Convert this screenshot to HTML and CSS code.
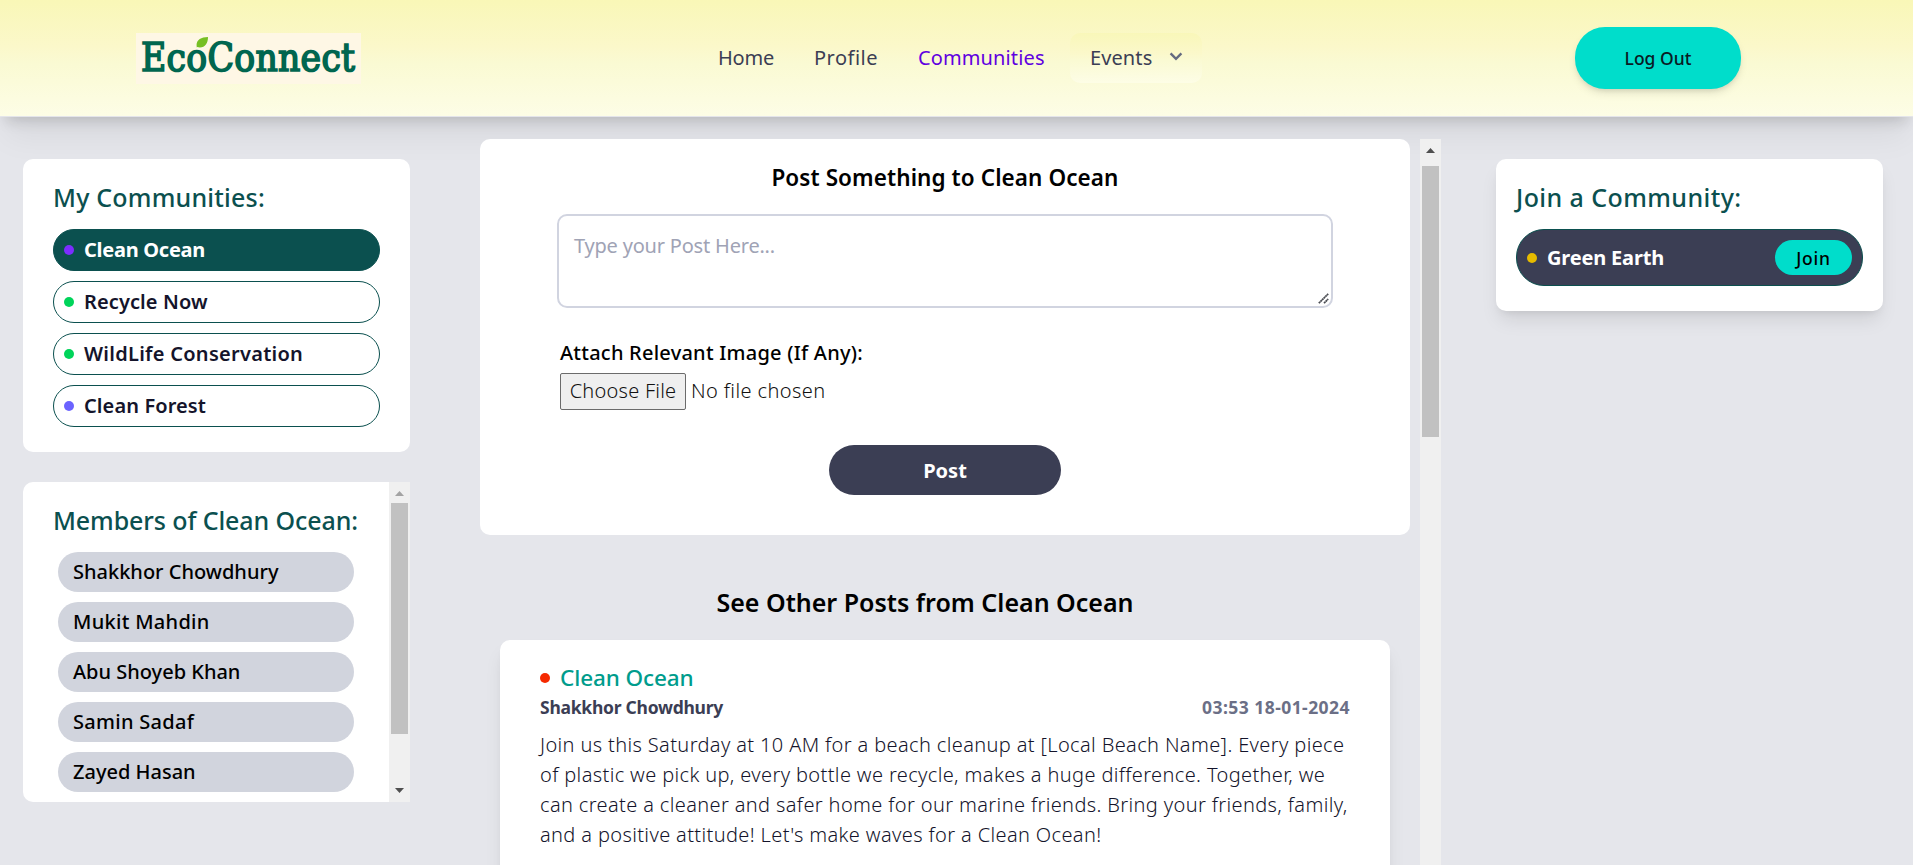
FILE: index.html
```html
<!DOCTYPE html>
<html lang="en">
<head>
<meta charset="utf-8">
<title>EcoConnect</title>
<link rel="stylesheet" href="styles.css">
</head>
<body>
<header class="topbar">
  <div class="logo">
    <span class="logo-text">EcoConnect</span>
    <svg class="leaf" width="12" height="11" viewBox="0 0 12 11"><path d="M1 11C-1 4 4 0 12 0C12 7 8 12 1 10Z" fill="#76bf23"/></svg>
  </div>
  <nav class="nav">
    <a class="home">Home</a>
    <a class="profile">Profile</a>
    <a class="active">Communities</a>
    <a class="events">Events
      <svg width="14" height="9" viewBox="0 0 14 9"><path d="M1.6 1.4L7 6.8L12.4 1.4" fill="none" stroke="#646a80" stroke-width="2.400"/></svg>
    </a>
  </nav>
  <button class="logout">Log Out</button>
</header>
<main class="layout">
  <aside class="left">
    <section class="card communities">
      <h2 class="side-title t-mine">My Communities:</h2>
      <ul class="list">
        <li class="pill selected"><i class="dot violet"></i>Clean Ocean</li>
        <li class="pill"><i class="dot green"></i>Recycle Now</li>
        <li class="pill wide"><i class="dot green"></i>WildLife Conservation</li>
        <li class="pill"><i class="dot indigo"></i>Clean Forest</li>
      </ul>
    </section>
    <section class="card members">
      <div class="members-body">
        <h2 class="side-title t-members">Members of Clean Ocean:</h2>
        <ul class="list names">
          <li>Shakkhor Chowdhury</li>
          <li class="loose">Mukit Mahdin</li>
          <li>Abu Shoyeb Khan</li>
          <li class="loose">Samin Sadaf</li>
          <li>Zayed Hasan</li>
        </ul>
      </div>
      <div class="scrollbar">
        <svg class="arrow faded" width="9" height="5" viewBox="0 0 9 5"><path d="M0 5L4.500 0L9 5Z"/></svg>
        <div class="thumb"></div>
        <svg class="arrow down" width="9" height="5" viewBox="0 0 9 5"><path d="M0 0H9L4.500 5Z"/></svg>
      </div>
    </section>
  </aside>
  <section class="feed">
    <div class="feed-body">
      <form class="card composer">
        <h2 class="composer-title">Post Something to Clean Ocean</h2>
        <div class="post-box">Type your Post Here...
          <svg class="grip" width="11" height="11" viewBox="0 0 11 11"><path d="M.8 10.200L10.200 .8M6 10.200L10.200 6" stroke="#4a4c52" stroke-width="1.700" stroke-dasharray="2 .3"/></svg>
        </div>
        <div class="attach">
          <label class="attach-label">Attach Relevant Image (If Any):</label>
          <div class="file"><span class="choose">Choose File</span><span class="none">No file chosen</span></div>
        </div>
        <button class="post-btn" type="button">Post</button>
      </form>
      <h2 class="others">See Other Posts from Clean Ocean</h2>
      <article class="card post">
        <h3 class="post-title"><i class="dot red"></i>Clean Ocean</h3>
        <div class="meta"><span class="author">Shakkhor Chowdhury</span><time>03:53 18-01-2024</time></div>
        <p class="text">Join us this Saturday at 10 AM for a beach cleanup at [Local Beach Name]. Every piece<br>of plastic we pick up, every bottle we recycle, makes a huge difference. Together, we<br>can create a cleaner and safer home for our marine friends. Bring your friends, family,<br>and a positive attitude! Let's make waves for a Clean Ocean!</p>
      </article>
    </div>
    <div class="scrollbar">
      <svg class="arrow" width="9" height="5" viewBox="0 0 9 5"><path d="M0 5L4.500 0L9 5Z"/></svg>
      <div class="thumb"></div>
    </div>
  </section>
  <aside class="card join">
    <h2 class="side-title t-join">Join a Community:</h2>
    <div class="join-row"><i class="dot amber"></i><span class="join-name">Green Earth</span><button class="join-btn">Join</button></div>
  </aside>
</main>
</body>
</html>
```
FILE: styles.css
```css
* { box-sizing: border-box; }
body {
  margin: 0;
  height: 865px;
  overflow: hidden;
  background: #e5e6eb;
  font: 400 20px/30px "Noto Sans", sans-serif;
  color: #000;
}
h2, h3, p, ul { margin: 0; padding: 0; font-weight: 500; }
ul { list-style: none; }
button { border: 0; padding: 0; font-family: inherit; }
svg { display: block; }
.card { background: #fff; border-radius: 10px; }

.topbar {
  display: flex;
  align-items: center;
  height: 117px;
  padding: 0 172px 1px 136px;
  background: linear-gradient(#f9f7b7, #fbf8ca 40%, #fafad3 55%, #fdfde6) 0 0 / 100% 116px no-repeat, #e4e5ea;
  box-shadow: 0 25px 31px -6px rgba(0,0,0,.06), 0 10px 13px -6px rgba(0,0,0,.15);
}
.logo {
  position: relative;
  width: 225px;
  height: 51px;
  padding-left: 5px;
  background: #fef7e5;
}
.logo-text {
  font: 400 38.500px/50px "DejaVu Serif Condensed", "DejaVu Serif", serif;
  font-stretch: condensed;
  letter-spacing: .3px;
  color: #00664f;
  -webkit-text-stroke: 1.600px #00664f;
}
.leaf { position: absolute; left: 60px; top: 4px; }
.nav {
  display: flex;
  align-items: center;
  height: 50px;
  margin-left: 357px;
  color: #3b3e54;
}
.home { width: 96px; letter-spacing: -.2px; }
.profile { width: 104px; letter-spacing: .5px; }
.active { width: 152px; color: #6000e0; letter-spacing: .12px; }
.events {
  display: flex;
  align-items: center;
  gap: 17px;
  width: 132px;
  height: 50px;
  padding-left: 20px;
  border-radius: 10px;
  background: linear-gradient(#f9f7b9, #fbf8ca 40%, #fafad3 55%, #fdfde6);
  letter-spacing: .1px;
}
.events svg { margin-top: -4px; }
.logout {
  width: 166px;
  height: 62px;
  margin-left: auto;
  border-radius: 30px;
  background: #00ddcb;
  color: #0a1a24;
  font-size: 17.500px;
  font-weight: 500;
  box-shadow: 0 5px 8px -1px rgba(0,0,0,.1), 0 3px 5px -2px rgba(0,0,0,.1);
}

.layout { display: flex; align-items: flex-start; height: 748px; }
.left { width: 387px; margin: 42px 70px 0 23px; }
.communities { height: 293px; padding: 21px 30px; }
.side-title { font-size: 25px; line-height: 35px; color: #0b504f; white-space: nowrap; }
.t-mine { letter-spacing: .2px; }
.t-members { letter-spacing: -.1px; }
.t-join { letter-spacing: .42px; }
.list { display: flex; flex-direction: column; gap: 10px; margin-top: 14px; }
.pill {
  display: flex;
  align-items: center;
  gap: 10px;
  height: 42px;
  padding-left: 10px;
  border: 1px solid #0b504f;
  border-radius: 21px;
  font-weight: 600;
  letter-spacing: .1px;
  color: #14142b;
}
.pill.wide { letter-spacing: .27px; }
.pill.selected { background: #0b504f; color: #fff; font-weight: 700; letter-spacing: -.27px; }
.dot { width: 10px; height: 10px; border-radius: 50%; flex: none; }
.violet { background: #7c2dff; }
.green { background: #00d45a; }
.indigo { background: #6b63ff; }
.red { background: #f52900; }
.amber { background: #e6bb00; }
.members { display: flex; height: 320px; margin-top: 30px; border-radius: 10px 0 0 10px; }
.members-body { width: 366px; padding: 21px 30px; }
.names { width: 296px; margin: 14px 0 0 5px; }
.names li {
  height: 40px;
  padding-left: 15px;
  border-radius: 20px;
  background: #d1d4dd;
  line-height: 40px;
  font-weight: 500;
}
.names .loose { letter-spacing: .3px; }
.scrollbar {
  display: flex;
  flex-direction: column;
  align-items: center;
  width: 21px;
  background: #f0f0f0;
}
.thumb { width: 17px; background: #c1c1c1; }
.arrow { margin-top: 9px; fill: #4f4f4f; }
.arrow.faded { fill: #a3a3a3; }
.members .thumb { height: 231px; margin-top: 7px; }
.arrow.down { margin-top: 54px; }

.feed { display: flex; width: 961px; height: 726px; margin-top: 22px; overflow: hidden; }
.feed-body { width: 940px; padding-right: 10px; }
.feed .thumb { height: 271px; margin-top: 13px; }
.composer { display: flex; flex-direction: column; align-items: center; height: 396px; padding-top: 23px; }
.composer-title { font-size: 22.500px; line-height: 32px; font-weight: 600; letter-spacing: .08px; }
.post-box {
  position: relative;
  width: 776px;
  height: 94px;
  margin-top: 20px;
  padding: 15px 15px;
  border: 2px solid #d1d4e0;
  border-radius: 10px;
  color: #a0a3b5;
  letter-spacing: -.2px;
}
.grip { position: absolute; right: 2px; bottom: 2px; }
.attach { width: 770px; margin-top: 30px; }
.attach-label { display: block; font-weight: 500; letter-spacing: .24px; }
.file { display: flex; align-items: center; gap: 5px; margin-top: 5px; font-weight: 350; color: #111; }
.choose {
  width: 126px;
  height: 37px;
  border: 1px solid #6b6b6b;
  border-radius: 2px;
  background: #efefef;
  text-align: center;
  line-height: 34px;
  letter-spacing: .24px;
}
.none { letter-spacing: .4px; line-height: 34px; margin-top: -1px; }
.post-btn {
  width: 232px;
  height: 50px;
  margin-top: 35px;
  border-radius: 25px;
  background: #3b3e54;
  color: #fff;
  font-size: 20px;
  font-weight: 700;
}
.others {
  margin: 50px 40px 20px 0;
  text-align: center;
  font-size: 25px;
  line-height: 35px;
  font-weight: 600;
}
.post {
  height: 400px;
  margin: 0 20px;
  padding: 20px 40px;
  box-shadow: 0 12px 19px -4px rgba(0,0,0,.1), 0 5px 8px -5px rgba(0,0,0,.1);
}
.post-title {
  display: flex;
  align-items: center;
  gap: 10px;
  font-size: 22.500px;
  line-height: 35px;
  letter-spacing: -.1px;
  color: #009c8c;
}
.meta { display: flex; justify-content: space-between; height: 25px; line-height: 25px; font-size: 17.500px; font-weight: 700; }
.author { color: #3b3e54; letter-spacing: -.26px; }
time { color: #6b6f86; letter-spacing: .45px; }
.text { margin-top: 10px; font-weight: 350; letter-spacing: .365px; color: #14142b; white-space: nowrap; }

.join {
  width: 387px;
  height: 152px;
  margin: 42px 0 0 55px;
  padding: 21px 20px;
  box-shadow: 0 12px 19px -4px rgba(0,0,0,.1), 0 5px 8px -5px rgba(0,0,0,.1);
}
.join-row {
  display: flex;
  align-items: center;
  gap: 10px;
  height: 57px;
  margin-top: 14px;
  padding: 0 10px;
  border: 1px solid #0b504f;
  border-radius: 28px;
  background: #3b3e54;
}
.join-name { color: #fff; font-weight: 700; letter-spacing: -.17px; }
.join-btn {
  width: 77px;
  height: 35px;
  margin-left: auto;
  border-radius: 18px;
  background: #00ddcb;
  font-size: 17.500px;
  font-weight: 500;
  letter-spacing: .8px;
}
```
